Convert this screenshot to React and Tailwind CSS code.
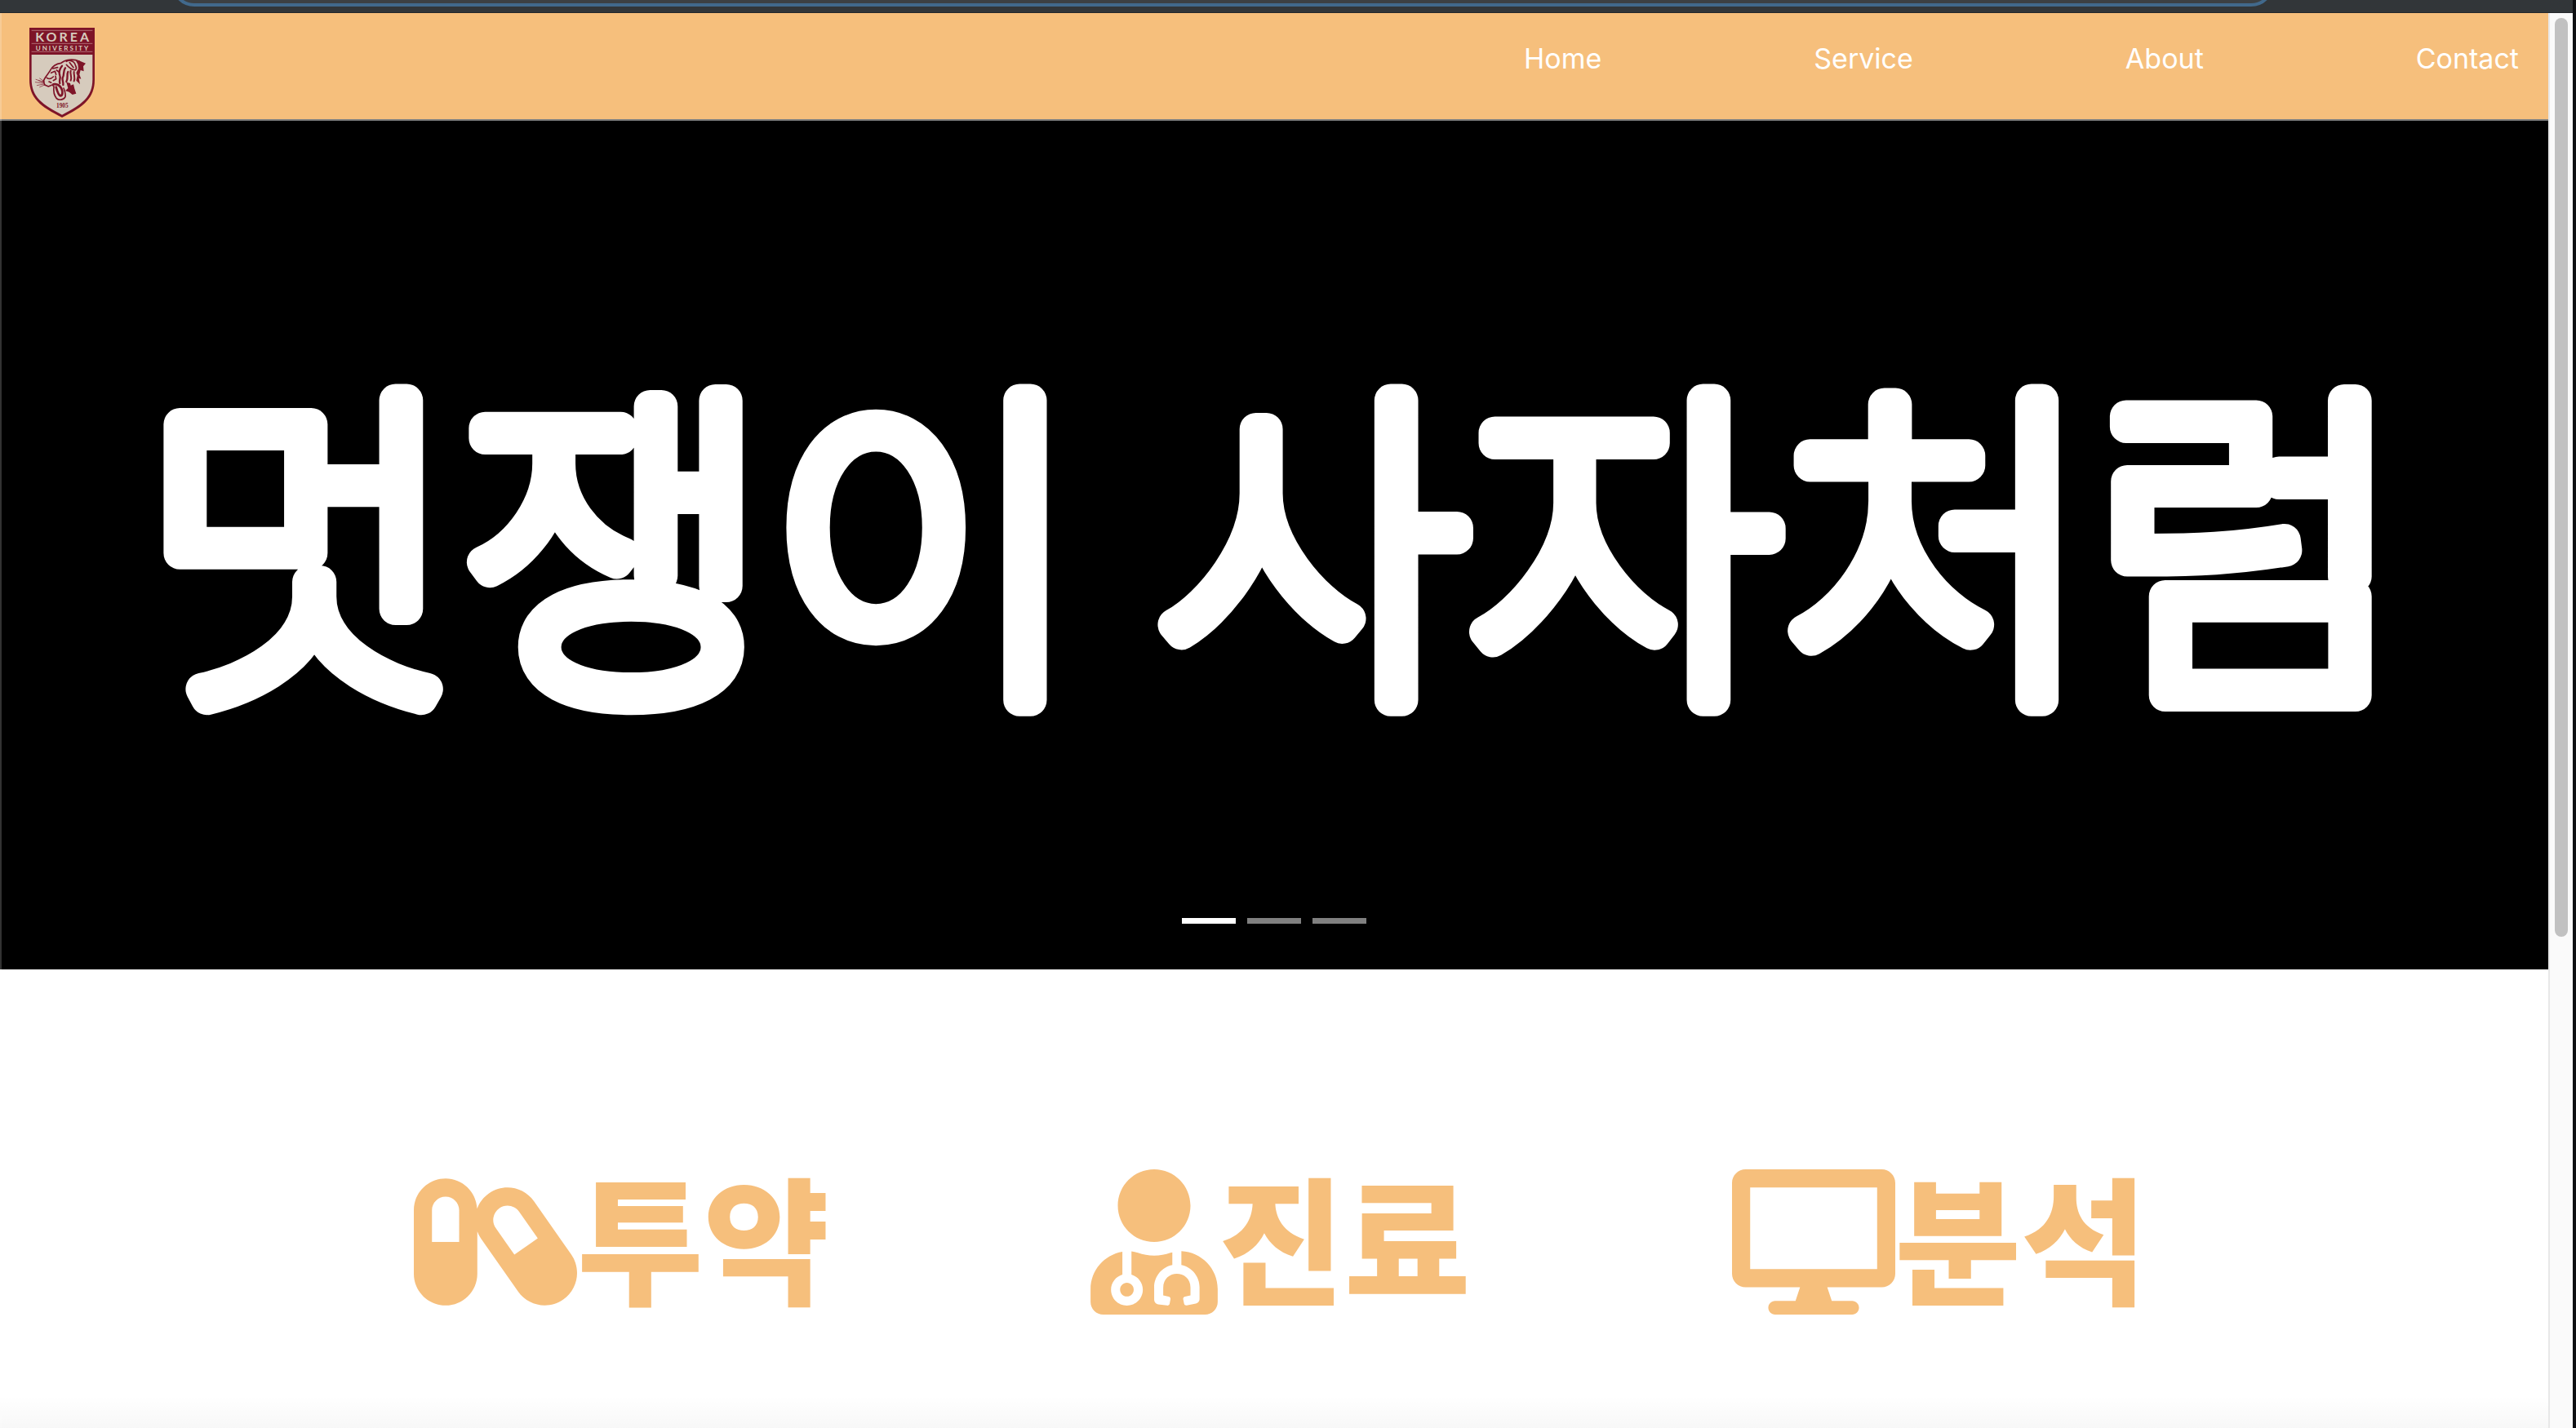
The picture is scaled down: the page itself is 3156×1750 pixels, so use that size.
import { FaCapsules, FaUserMd, FaDesktop } from "react-icons/fa";

const links = ["Home", "Service", "About", "Contact"];

const services = [
  { label: "투약", Icon: FaCapsules, size: "w-[200px]" },
  { label: "진료", Icon: FaUserMd, size: "w-[156px]" },
  { label: "분석", Icon: FaDesktop, size: "w-[200px]" },
];

function Crest() {
  return (
    <svg viewBox="0 0 240 330" className="h-[110px] w-20" role="img" aria-label="Korea University">
      <path d="M0 0H240V190C240 260 200 290 120 330C40 290 0 260 0 190Z" fill="#7e1428" />
      <path d="M8 99H232V190C232 254 194 282 120 320C46 282 8 254 8 190Z" fill="#d6cbbd" />
      <path d="M8 10H232M8 58H232M8 88H232" stroke="#b06a74" strokeWidth="3" />
      <text x="125" y="52" textAnchor="middle" fontSize="48" fontWeight="700" letterSpacing="9" fill="#d6cbbd" fontFamily="Lato, sans-serif">KOREA</text>
      <text x="123" y="83" textAnchor="middle" fontSize="24" fontWeight="700" letterSpacing="6" fill="#d6cbbd" fontFamily="Lato, sans-serif">UNIVERSITY</text>
      <g fill="none" stroke="#7e1428" strokeWidth="5" strokeLinecap="round" strokeLinejoin="round">
        <path d="M52 196C56 182 68 172 76 158C84 142 96 132 116 130C130 118 160 112 184 124" />
        <path d="M52 196L56 210L70 216L84 210L90 216C88 232 92 250 100 260C108 268 126 266 132 254C134 244 130 232 126 222" />
        <path d="M88 208C100 206 112 212 118 224C124 236 122 250 114 250C106 248 102 232 98 218" strokeWidth="8" />
        <path d="M24 190L52 200M22 200L50 204M28 212L52 207M38 218L58 209M38 186L56 198M34 194L50 200" strokeWidth="2" />
        <path d="M64 184C72 190 82 186 88 180M80 166L94 160L98 172M86 150L104 146M88 194L98 188L96 178M72 198L80 202M100 156L108 162" />
        <path d="M120 140C110 152 108 164 112 176C116 186 108 194 112 204M132 148C122 160 130 172 122 184C120 194 126 200 124 210M142 162C136 172 144 184 136 198" strokeWidth="7" />
        <path d="M152 158C148 170 158 180 152 194M164 162C162 174 170 184 164 196" strokeWidth="6" />
        <path d="M136 124C144 118 160 120 166 130C170 142 178 150 168 156C154 154 144 146 136 136M148 128L162 146" />
      </g>
      <path d="M170 120L186 122L207 131L198 142L200 160L188 156L184 172L190 188L182 186L186 208L172 194L176 176L172 166L180 150L178 134Z" fill="#7e1428" />
      <path d="M136 200L150 204L152 212L162 208L166 224L172 242L158 246L146 236L132 232L142 222Z" fill="#7e1428" />
      <text x="121" y="294" textAnchor="middle" fontSize="22" fontWeight="700" fill="#7e1428" fontFamily="Liberation Serif, serif">1905</text>
    </svg>
  );
}

export default function App() {
  return (
    <div className="relative flex h-screen flex-col overflow-hidden border-r-4 border-[#0e1013] bg-white">
      <div className="flex h-4 shrink-0 items-end justify-center overflow-hidden border-b border-[#25282b] bg-[#323639] pr-[156px]">
        <div className="mb-[7px] h-14 w-[86%] shrink-0 rounded-[28px] border-4 border-[#41698c] bg-[#3c4043]" />
      </div>

      <div className="flex min-h-0 flex-1">
        <main className="relative min-w-0 flex-1 overflow-hidden">
          <header className="flex h-[132px] items-start justify-between border-b-2 border-[#808080] bg-[#f6bf7c] px-9 pt-[18px]">
            <a href="#home"><Crest /></a>
            <nav className="flex gap-[260px] pt-3 font-['Inter',sans-serif] text-[34px] leading-[52px] text-white">
              {links.map((l) => (
                <a key={l} href={"#" + l.toLowerCase()}>{l}</a>
              ))}
            </nav>
          </header>

          <section className="relative">
            <svg viewBox="0 0 3122 1040" className="block h-auto w-full bg-black">
              <text
                x="1562" y="682" textAnchor="middle" fontSize="416" fontWeight="100"
                fontFamily="'Noto Sans CJK KR', sans-serif"
                fill="#fff" stroke="#fff" strokeWidth="40" strokeLinejoin="round"
              >
                멋쟁이 사자처럼
              </text>
            </svg>
            <div className="absolute inset-x-0 bottom-14 flex justify-center gap-3.5">
              <button aria-label="Slide 1" className="h-[7px] w-[66px] bg-white" />
              <button aria-label="Slide 2" className="h-[7px] w-[66px] bg-[#808080]" />
              <button aria-label="Slide 3" className="h-[7px] w-[66px] bg-[#808080]" />
            </div>
          </section>

          <section className="flex justify-center gap-80 pl-4 pt-[219px] text-[#f6bf7c]">
            {services.map(({ label, Icon, size }) => (
              <div key={label} className="flex items-center">
                <Icon className={"h-[178px] shrink-0 " + size} />
                <h2 className="whitespace-nowrap pb-[18px] font-['Noto_Sans_CJK_KR',sans-serif] text-[168px] font-black leading-[212px]">{label}</h2>
              </div>
            ))}
          </section>
          <div className="absolute inset-x-0 bottom-0 h-10 bg-linear-to-b from-transparent to-black/3" />
          <div className="absolute inset-y-0 left-0 w-0.5 bg-white/20" />
        </main>
        <div className="w-[30px] shrink-0 border-l-2 border-[#e8e8e8] bg-[#fafafa] px-1.5 pt-1.5">
          <div className="h-[1126px] w-4 rounded-full bg-[#c1c1c1]" />
        </div>
      </div>
    </div>
  );
}
